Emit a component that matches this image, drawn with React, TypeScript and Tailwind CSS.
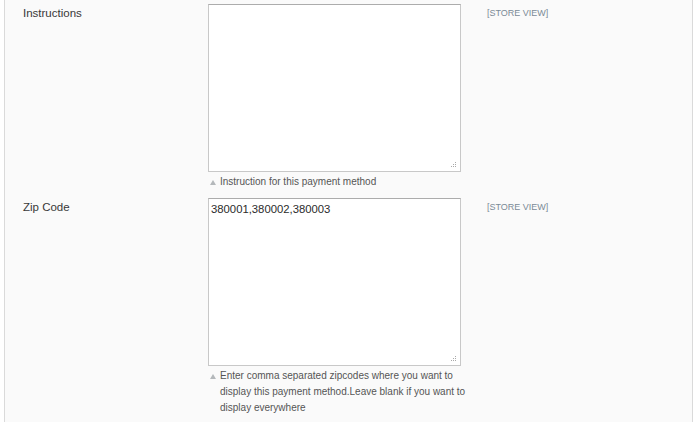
import React from "react"

function Grip() {
    return (
        <svg width="7" height="7" viewBox="0 0 7 7" className="absolute right-[3px] bottom-[2px]">
            <rect x="5" y="0" width="1" height="1" fill="#a9a9a9" />
            <rect x="3" y="2" width="1" height="1" fill="#a9a9a9" />
            <rect x="5" y="2" width="1" height="1" fill="#a9a9a9" />
            <rect x="1" y="4" width="1" height="1" fill="#a9a9a9" />
            <rect x="3" y="4" width="1" height="1" fill="#a9a9a9" />
            <rect x="5" y="4" width="1" height="1" fill="#a9a9a9" />
        </svg>
    )
}

function Note({ children }: { children: React.ReactNode }) {
    return (
        <div className="flex mt-[2px] text-[10px] leading-4 text-[#555] w-[266px]">
            <svg width="6" height="5" viewBox="0 0 6 5" className="shrink-0 mt-[6px] ml-[2px] mr-[4px]">
                <polygon points="3,0 6,5 0,5" fill="#b4b8bb" />
            </svg>
            <p>{children}</p>
        </div>
    )
}

function FieldRow({ label, value, note }: { label: string; value: string; note: React.ReactNode }) {
    return (
        <div className="flex">
            <div className="w-[203px] pl-[18px] pt-[1px] leading-4 text-[11.5px] text-[#383838]">{label}</div>
            <div className="w-[253px] flex flex-col">
                <div className="relative h-[168px] w-[253px] bg-white border border-[#c8c8c8] border-t-[#acacac]">
                    <div className="pl-[2px] pt-[2px] text-[11.3px] text-[#2b2b2b]">{value}</div>
                    <Grip />
                </div>
                <Note>{note}</Note>
            </div>
            <div className="pl-[26px] pt-[1px] leading-4 text-[9px] text-[#7a8a97]">[STORE VIEW]</div>
        </div>
    )
}

export default function App() {
    return (
        <div className="w-[700px] h-[422px] bg-white overflow-hidden" style={{ fontFamily: '"Liberation Sans", Arial, sans-serif' }}>
            <div className="ml-[4px] w-[689px] h-full border-x border-[#dadada] bg-[#fafafa] pt-[4px] flex flex-col gap-[8px]">
                <FieldRow label="Instructions" value="" note="Instruction for this payment method" />
                <FieldRow
                    label="Zip Code"
                    value="380001,380002,380003"
                    note="Enter comma separated zipcodes where you want to display this payment method.Leave blank if you want to display everywhere"
                />
            </div>
        </div>
    )
}
